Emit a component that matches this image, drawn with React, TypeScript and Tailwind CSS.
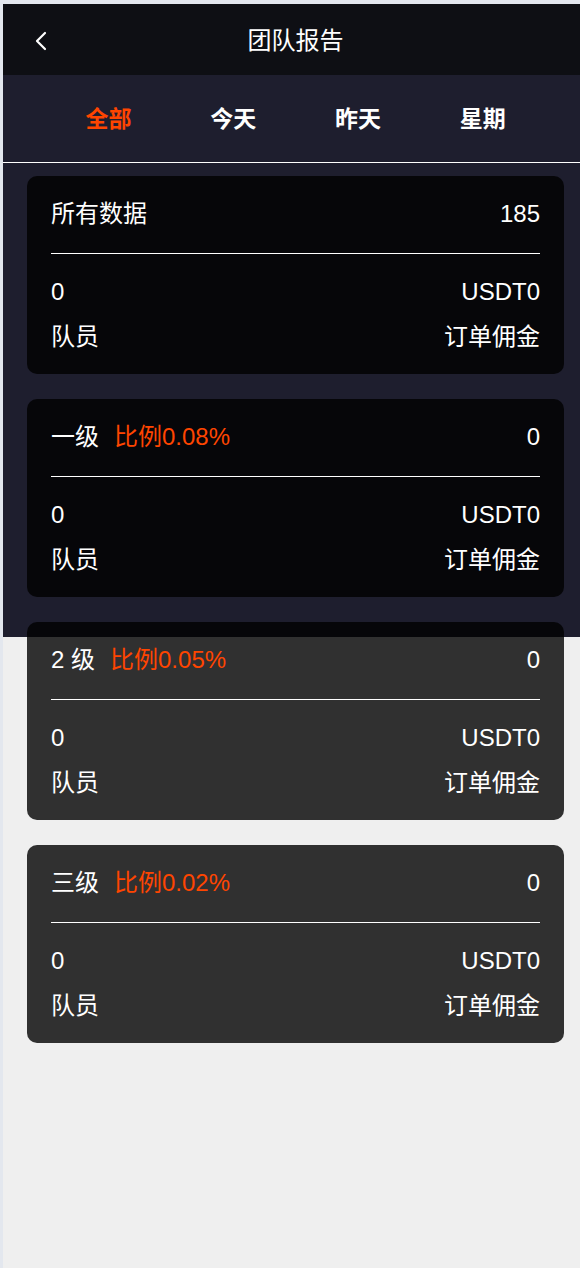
import React from 'react';

interface LevelCard {
  title: string;
  rate?: string;
  total: string;
}

const cards: LevelCard[] = [
  { title: '所有数据', total: '185' },
  { title: '一级', rate: '比例0.08%', total: '0' },
  { title: '2 级', rate: '比例0.05%', total: '0' },
  { title: '三级', rate: '比例0.02%', total: '0' },
];

const tabs = ['全部', '今天', '昨天', '星期'];

function ReportCard({ card }: { card: LevelCard }) {
  return (
    <div className="rounded-[10px] bg-black/80 px-6 pt-[22px] pb-[21px] text-[24px] leading-8 text-white">
      <div className="flex h-8 items-center justify-between">
        <div className="flex items-center">
          <span>{card.title}</span>
          {card.rate && <span className="ml-[15px] text-[#ff4500]">{card.rate}</span>}
        </div>
        <span>{card.total}</span>
      </div>
      <div className="mt-[23px] h-px bg-white" />
      <div className="mt-[22px] flex h-8 items-center justify-between">
        <span>0</span>
        <span>USDT0</span>
      </div>
      <div className="mt-[13px] flex h-8 items-center justify-between">
        <span>队员</span>
        <span>订单佣金</span>
      </div>
    </div>
  );
}

export default function App() {
  return (
    <div
      className="min-h-screen w-full overflow-hidden bg-[#efefef]"
      style={{ fontFamily: '"Liberation Sans", "Noto Sans CJK SC", sans-serif' }}
    >
      <div className="min-h-screen w-[588px] border-t-4 border-l-[3px] border-[#e3e7ee] bg-[linear-gradient(to_bottom,#1e1e2e_633px,#efefef_633px)]">
        <header className="relative flex h-[71px] items-center justify-center bg-[#0e0f14]">
          <button className="absolute left-[30px] top-[27px] flex h-[20px] w-[16px] items-center justify-center">
            <svg width="14" height="20" viewBox="0 0 14 20" fill="none">
              <polyline points="11,2 3,10 11,18" stroke="white" strokeWidth="2.2" strokeLinecap="round" strokeLinejoin="round" />
            </svg>
          </button>
          <h1 className="pt-[3px] text-[24px] text-white">团队报告</h1>
        </header>

        <nav className="grid h-[87px] grid-cols-4 items-center bg-[#1e1e2e] px-[43px]">
          {tabs.map((t, i) => (
            <div
              key={t}
              className={`pt-[2px] text-center text-[23px] font-bold ${i === 0 ? 'text-[#ff4500]' : 'text-white'}`}
            >
              {t}
            </div>
          ))}
        </nav>
        <div className="h-px bg-white" />

        <div className="mx-6 mt-[13px] flex flex-col gap-[25px] pb-10">
          {cards.map((c) => (
            <ReportCard key={c.title} card={c} />
          ))}
        </div>
      </div>
    </div>
  );
}
